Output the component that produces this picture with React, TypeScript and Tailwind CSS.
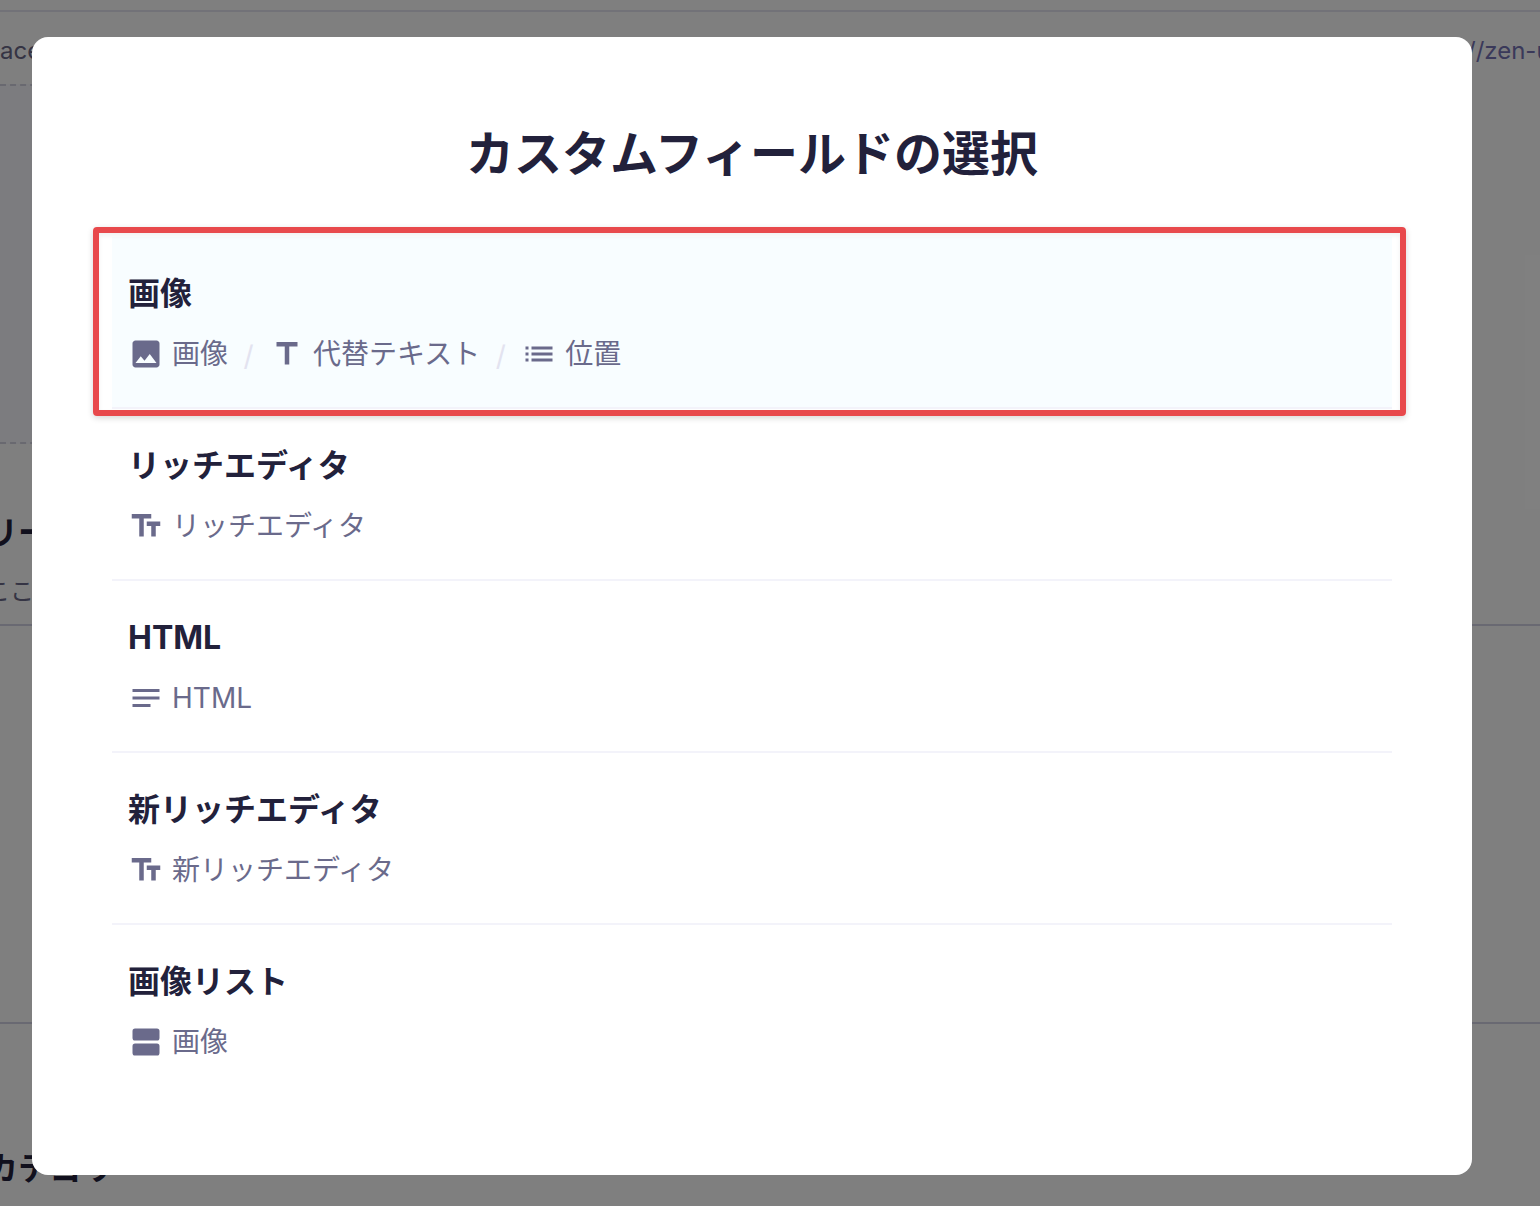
import { Fragment } from "react";
import type { ReactNode } from "react";

type Field = { icon: IconName; label: string };
type FieldGroup = { title: string; fields: Field[]; active?: boolean };
type IconName = "image" | "title" | "list" | "richText" | "notes" | "agenda";

const iconShapes: Record<IconName, ReactNode> = {
  image: (
    <path d="M21 19V5c0-1.1-.9-2-2-2H5c-1.1 0-2 .9-2 2v14c0 1.1.9 2 2 2h14c1.1 0 2-.9 2-2zM8.5 13.5l2.5 3.01L14.5 12l4.5 6H5l3.5-4.5z" />
  ),
  title: <path d="M5 4v3h5.5v12h3V7H19V4z" />,
  list: <path d="M3 13h2v-2H3v2zm0 4h2v-2H3v2zm0-8h2V7H3v2zm4 4h14v-2H7v2zm0 4h14v-2H7v2zM7 7v2h14V7H7z" />,
  richText: <path d="M2.5 4v3h5v12h3V7h5V4h-13zm19 5h-9v3h3v7h3v-7h3V9z" />,
  notes: <path d="M3 18h12v-2H3v2zM3 6v2h18V6H3zm0 7h18v-2H3v2z" />,
  agenda: (
    <>
      <rect x="3" y="3" width="18" height="8" rx="1.7" />
      <rect x="3" y="13" width="18" height="8" rx="1.7" />
    </>
  ),
};

function Icon({ name }: { name: IconName }) {
  return (
    <svg viewBox="0 0 24 24" fill="currentColor" className="size-9 shrink-0" aria-hidden="true">
      {iconShapes[name]}
    </svg>
  );
}

const groups: FieldGroup[] = [
  {
    title: "画像",
    active: true,
    fields: [
      { icon: "image", label: "画像" },
      { icon: "title", label: "代替テキスト" },
      { icon: "list", label: "位置" },
    ],
  },
  { title: "リッチエディタ", fields: [{ icon: "richText", label: "リッチエディタ" }] },
  { title: "HTML", fields: [{ icon: "notes", label: "HTML" }] },
  { title: "新リッチエディタ", fields: [{ icon: "richText", label: "新リッチエディタ" }] },
  { title: "画像リスト", fields: [{ icon: "agenda", label: "画像" }] },
];

function GroupRow({ group, last }: { group: FieldGroup; last: boolean }) {
  return (
    <li className="relative">
      <button
        type="button"
        className={`flex w-full flex-col gap-[14px] px-4 py-8 text-left ${last ? "" : "border-b-2 border-[#f3f3fa]"} ${group.active ? "bg-[#f8fdff]" : ""}`}
      >
        <span className="text-[32px] leading-[50px] font-bold text-[#22213b]">{group.title}</span>
        <span className="flex items-center text-[28px] leading-[42px] text-[#6a6a8b]">
          {group.fields.map((field, i) => (
            <Fragment key={field.label}>
              {i > 0 && <span className="w-[41px] pt-1 text-center leading-[38px] text-[#e3e3f0]">/</span>}
              <span className="flex items-center gap-2">
                <Icon name={field.icon} />
                {field.label}
              </span>
            </Fragment>
          ))}
        </span>
      </button>
      {group.active && (
        <span className="pointer-events-none absolute -top-[10px] -right-[14px] -bottom-[7px] -left-[19px] rounded-[4px] border-6 border-[#e8494c] shadow-[0_2px_6px_rgba(0,0,0,0.16),inset_0_3px_5px_rgba(0,0,0,0.06)]" />
      )}
    </li>
  );
}

function EditorPage() {
  return (
    <div className="col-start-1 row-start-1 overflow-hidden bg-white text-[#22213b]" aria-hidden="true">
      <div className="h-3 border-b-2 border-[#e4e4f0]" />
      <div className="flex h-[72px] items-center justify-between pt-1.5 text-2xl text-[#6a6888]">
        <span>ace</span>
        <span className="w-[73px] overflow-hidden whitespace-nowrap text-[#7472b4]">//zen-u</span>
      </div>
      <div className="h-[360px] w-1/2 border-y-2 border-dashed border-[#d2d2e0] bg-[#f8f8ff]" />
      <div className="-ml-3.5 flex h-[180px] flex-col pt-16">
        <span className="text-[32px] leading-[50px] font-bold">リー</span>
        <span className="pt-4 text-2xl leading-9 text-[#6a6888]">ここ</span>
      </div>
      <div className="h-[400px] border-y-2 border-[#d2d2e4]" />
      <div className="-ml-3.5 pt-[120px] text-[32px] leading-[50px] font-bold">カテゴリ</div>
    </div>
  );
}

export default function App() {
  return (
    <div className="grid min-h-screen [font-family:Inter,'Noto_Sans_CJK_JP',sans-serif]">
      <EditorPage />
      <div className="relative col-start-1 row-start-1 bg-black/50 pt-[37px] pr-[68px] pb-[31px] pl-8">
        <section role="dialog" aria-labelledby="dialog-title" className="rounded-2xl bg-white p-20">
          <h1 id="dialog-title" className="mb-[46px] text-center text-5xl leading-[74px] font-bold text-[#22213b]">
            カスタムフィールドの選択
          </h1>
          <ul>
            {groups.map((group, i) => (
              <GroupRow key={group.title} group={group} last={i === groups.length - 1} />
            ))}
          </ul>
        </section>
      </div>
    </div>
  );
}
